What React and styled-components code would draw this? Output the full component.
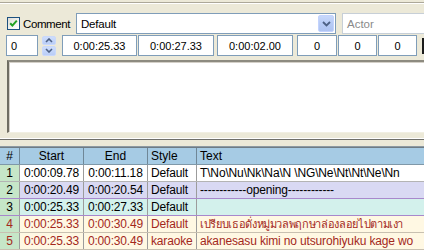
import styled, { createGlobalStyle } from 'styled-components';

const GlobalStyle = createGlobalStyle`
  html, body {
    margin: 0;
    padding: 0;
    background: #ece9d8;
  }
  body {
    font-family: "Liberation Sans", Arial, sans-serif;
    font-size: 11px;
    color: #000;
  }
`;

const rows = [
  { n: 1, start: '0:00:09.78', end: '0:00:11.18', style: 'Default', text: 'T\\No\\Nu\\Nk\\Na\\N \\NG\\Ne\\Nt\\Nt\\Ne\\Nn', kind: 'plain' },
  { n: 2, start: '0:00:20.49', end: '0:00:20.54', style: 'Default', text: '------------opening------------', kind: 'selected' },
  { n: 3, start: '0:00:25.33', end: '0:00:27.33', style: 'Default', text: '', kind: 'active' },
  { n: 4, start: '0:00:25.33', end: '0:00:30.49', style: 'Default', text: 'เปรียบเธอดั่งหมู่มวลพฤกษาล่องลอยไปตามเงา', kind: 'collide', thai: true },
  { n: 5, start: '0:00:25.33', end: '0:00:30.49', style: 'karaoke', text: 'akanesasu kimi no utsurohiyuku kage wo', kind: 'collide' },
];

const rowBg = {
  plain: '#ffffff',
  selected: '#d9d9f3',
  active: '#d3f1ec',
  collide: '#fff8e3',
};

const rowLine = {
  plain: '#b4b4b4',
  selected: '#a888cc',
  active: '#a888cc',
  collide: '#c8c0b0',
};

const App = () => {
  return (
    <Root>
      <GlobalStyle />
      <TopEdge />
      <EditPanel>
        <ControlRow>
          <CheckLabel>
            <CheckBox>
              <svg width="11" height="11" viewBox="0 0 11 11">
                <path d="M2.2 5.2 L4.4 7.6 L8.8 2.6" fill="none" stroke="#21a121" strokeWidth="2" />
              </svg>
            </CheckBox>
            <span>Comment</span>
          </CheckLabel>
          <Combo>
            <ComboText>Default</ComboText>
            <DropButton>
              <svg width="9" height="6" viewBox="0 0 9 6">
                <path d="M1 1 L4.5 4.5 L8 1" fill="none" stroke="#4d6185" strokeWidth="1.8" />
              </svg>
            </DropButton>
          </Combo>
          <ActorBox>Actor</ActorBox>
        </ControlRow>
        <ControlRow $top={1}>
          <Field $w={32} $align="left">0</Field>
          <Spin>
            <SpinHalf>
              <svg width="8" height="5" viewBox="0 0 8 5">
                <path d="M1 4 L4 1 L7 4" fill="none" stroke="#4d6185" strokeWidth="1.6" />
              </svg>
            </SpinHalf>
            <SpinHalf>
              <svg width="8" height="5" viewBox="0 0 8 5">
                <path d="M1 1 L4 4 L7 1" fill="none" stroke="#4d6185" strokeWidth="1.6" />
              </svg>
            </SpinHalf>
          </Spin>
          <Field $w={75} $gap={6}>0:00:25.33</Field>
          <Field $w={76} $gap={1}>0:00:27.33</Field>
          <Field $w={76} $gap={3}>0:00:02.00</Field>
          <Field $w={40} $gap={4}>0</Field>
          <Field $w={39} $gap={1}>0</Field>
          <Field $w={39} $gap={1}>0</Field>
          <CutButton />
        </ControlRow>
        <TextArea />
      </EditPanel>
      <Sash />
      <Grid>
        <HeaderRow>
          <HeadCell $align="center">#</HeadCell>
          <HeadCell $align="center">Start</HeadCell>
          <HeadCell $align="center">End</HeadCell>
          <HeadCell>Style</HeadCell>
          <HeadCell $last>Text</HeadCell>
        </HeaderRow>
        {rows.map((r) => (
          <DataRow key={r.n} $bg={rowBg[r.kind]} $line={rowLine[r.kind]} $red={r.kind === 'collide'}>
            <NumCell>{r.n}</NumCell>
            <Cell $align="center">{r.start}</Cell>
            <Cell $align="center">{r.end}</Cell>
            <Cell>{r.style}</Cell>
            <Cell $last $thai={r.thai}>{r.text}</Cell>
          </DataRow>
        ))}
      </Grid>
    </Root>
  );
};

export default App;

const Root = styled.div`
  width: 424px;
  height: 250px;
  overflow: hidden;
  background: #ece9d8;
`;

const TopEdge = styled.div`
  height: 2px;
  border-bottom: 1px solid #aca899;
  box-shadow: 0 1px 0 #ffffff;
`;

const EditPanel = styled.div`
  padding: 10px 0 5px 6px;
  border-bottom: 1px solid #ffffff;
`;

const ControlRow = styled.div`
  display: flex;
  align-items: center;
  height: 21px;
  margin-top: ${(p) => p.$top || 0}px;
  white-space: nowrap;
`;

const CheckLabel = styled.label`
  display: flex;
  align-items: center;
  width: 70px;
  flex: none;
  gap: 3px;
  letter-spacing: -0.4px;
  font-size: 11.5px;
`;

const CheckBox = styled.span`
  box-sizing: border-box;
  width: 13px;
  height: 13px;
  margin-left: 1px;
  border: 1px solid #1c5180;
  background: linear-gradient(135deg, #dcdcd7 0%, #f4f4f0 60%, #ffffff 100%);
  display: flex;
  align-items: center;
  justify-content: center;
`;

const Combo = styled.div`
  box-sizing: border-box;
  width: 260px;
  height: 21px;
  flex: none;
  display: flex;
  align-items: stretch;
  background: #fff;
  border: 1px solid #7f9db9;
`;

const ComboText = styled.div`
  flex: 1;
  padding-left: 4px;
  display: flex;
  align-items: center;
  font-size: 11.5px;
  letter-spacing: -0.2px;
`;

const DropButton = styled.div`
  width: 16px;
  margin: 1px;
  border-radius: 2px;
  border: 1px solid #c3d3fd;
  box-sizing: border-box;
  background: linear-gradient(180deg, #c7d8fb 0%, #b7cbf5 50%, #aec3f1 100%);
  display: flex;
  align-items: center;
  justify-content: center;
`;

const ActorBox = styled.div`
  box-sizing: border-box;
  width: 120px;
  height: 21px;
  flex: none;
  margin-left: 6px;
  padding-left: 4px;
  display: flex;
  align-items: center;
  color: #8a8a8a;
  background: #fff;
  border: 1px solid #c7cfd7;
  border-right: none;
  font-size: 11.5px;
`;

const Field = styled.div`
  box-sizing: border-box;
  width: ${(p) => p.$w}px;
  height: 21px;
  flex: none;
  margin-left: ${(p) => p.$gap || 0}px;
  padding: 0 4px;
  display: flex;
  align-items: center;
  justify-content: ${(p) => (p.$align === 'left' ? 'flex-start' : 'center')};
  background: #fff;
  border: 1px solid #7f9db9;
`;

const Spin = styled.div`
  box-sizing: border-box;
  width: 14px;
  height: 20px;
  margin-left: 4px;
  flex: none;
  display: flex;
  flex-direction: column;
  gap: 1px;
`;

const SpinHalf = styled.div`
  flex: 1;
  border-radius: 2px;
  background: linear-gradient(180deg, #cdddfc 0%, #b9cdf6 100%);
  border: 1px solid #c9d8fb;
  display: flex;
  align-items: center;
  justify-content: center;
`;

const CutButton = styled.div`
  width: 3px;
  height: 16px;
  margin-left: 5px;
  flex: none;
  background: #1b1b1b;
`;

const TextArea = styled.div`
  box-sizing: border-box;
  height: 73px;
  margin-top: 4px;
  margin-left: 1px;
  background: #fff;
  border-top: 2px solid #8d8b80;
  border-left: 2px solid #6f6d62;
  border-bottom: 1px solid #f1efe2;
  box-shadow: inset 1px 1px 0 #d4d0c8;
`;

const Sash = styled.div`
  height: 6px;
  border-top: 1px solid #6f6f6a;
  border-bottom: 1px solid #8e9aa2;
`;

const Grid = styled.div`
  border-top: 1px solid #6e7b84;
`;

const columns = '20px 64px 64px 49px 1fr';

const HeaderRow = styled.div`
  display: grid;
  grid-template-columns: ${columns};
  height: 17px;
  background: #a6cbe4;
  border-bottom: 1px solid #7f98a8;
  box-sizing: border-box;
  font-size: 12px;
`;

const HeadCell = styled.div`
  display: flex;
  align-items: center;
  justify-content: ${(p) => (p.$align === 'center' ? 'center' : 'flex-start')};
  padding-left: ${(p) => (p.$align === 'center' ? 0 : 3)}px;
  border-right: ${(p) => (p.$last ? 'none' : '1px solid #6f8797')};
  white-space: nowrap;
  overflow: hidden;
`;

const DataRow = styled.div`
  display: grid;
  grid-template-columns: ${columns};
  height: 17px;
  box-sizing: border-box;
  background: ${(p) => p.$bg};
  border-bottom: 1px solid ${(p) => p.$line};
  color: ${(p) => (p.$red ? '#a3281c' : '#000')};
  font-size: 12px;
`;

const Cell = styled.div`
  display: flex;
  align-items: center;
  justify-content: ${(p) => (p.$align === 'center' ? 'center' : 'flex-start')};
  padding-left: ${(p) => (p.$align === 'center' ? 0 : 3)}px;
  border-right: ${(p) => (p.$last ? 'none' : '1px solid #9c9c9c')};
  white-space: nowrap;
  overflow: hidden;
  font-size: ${(p) => (p.$thai ? '11px' : 'inherit')};
  letter-spacing: ${(p) => (p.$thai ? '-0.35px' : '-0.15px')};
`;

const NumCell = styled(Cell)`
  justify-content: center;
  padding-left: 0;
  background: #c6e6c8;
`;
